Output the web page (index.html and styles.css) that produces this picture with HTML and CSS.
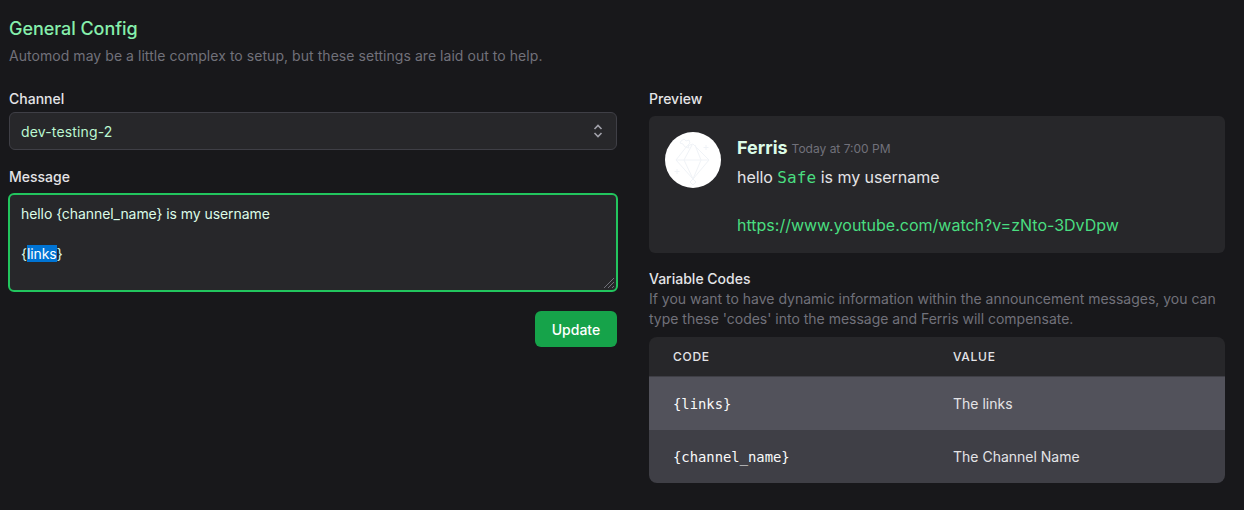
FILE: index.html
```html
<!DOCTYPE html>
<html>
<head>
    <meta charset="utf-8" />
    <title>General Config</title>
    <link rel="stylesheet" href="styles.css">
</head>
<body>
    <header class="head">
        <h1 class="title">General Config</h1>
        <p class="subtitle">Automod may be a little complex to setup, but these settings are laid out to help.</p>
    </header>

    <main class="columns">
        <section class="form">
            <p class="label">Channel</p>
            <div class="select">
                <span>dev-testing-2</span>
                <svg class="chevrons" width="10" height="16" viewBox="0 0 10 16" fill="none" stroke="#a1a1aa" stroke-width="1.6">
                    <path d="M1.500 6 5 2.500 8.500 6" />
                    <path d="M1.500 10 5 13.500 8.500 10" />
                </svg>
            </div>

            <p class="label label-message">Message</p>
            <div class="textarea">
                <p class="line">hello {channel_name} is my username</p>
                <p class="line line-gap">{<span class="selected">links</span>}</p>
                <svg class="grip" width="12" height="12" viewBox="0 0 12 12" stroke="#71717a" stroke-width="1">
                    <path d="M1 11 11 1M5 11l6-6M9 11l2-2" />
                </svg>
            </div>

            <div class="actions">
                <button class="update">Update</button>
            </div>
        </section>

        <section class="side">
            <p class="label">Preview</p>
            <div class="preview">
                <div class="avatar">
                    <svg width="56" height="56" viewBox="0 0 56 56" fill="none" stroke="#f0f3f7" stroke-width="1">
                        <path d="M22 14 28 12 44 28 28 47 11 28Z" />
                        <path d="M11 28H44M27 13 19 28 28 47 36 28 30 13" />
                        <path d="M16 9l3-2 2 2 3-1 1 3-2 2 1 3-4-1-2-3-3-1ZM28 47l3 3-3 3-3-3Z" />
                        <path d="M41 13v5M38.500 15.500h5M12 37v5M9.500 39.500h5" />
                    </svg>
                </div>
                <div class="message">
                    <p class="author"><strong>Ferris</strong> <span class="time">Today at 7:00 PM</span></p>
                    <p class="body body-text">hello <code class="mention">Safe</code> is my username</p>
                    <p class="body link-line"><a class="link">https://www.youtube.com/watch?v=zNto-3DvDpw</a></p>
                </div>
            </div>

            <p class="label label-codes">Variable Codes</p>
            <p class="hint">If you want to have dynamic information within the announcement messages, you can type these 'codes' into the message and Ferris will compensate.</p>

            <table class="codes">
                <thead>
                    <tr>
                        <th>Code</th>
                        <th>Value</th>
                    </tr>
                </thead>
                <tbody>
                    <tr class="row-light">
                        <td class="code">{links}</td>
                        <td>The links</td>
                    </tr>
                    <tr class="row-dark">
                        <td class="code">{channel_name}</td>
                        <td>The Channel Name</td>
                    </tr>
                </tbody>
            </table>
        </section>
    </main>
</body>
</html>
```

FILE: styles.css
```css
body {
    margin: 0;
    padding: 18px 19px 0 9px;
    height: 510px;
    box-sizing: border-box;
    overflow: hidden;
    background: #18181b;
    color: #e4e4e7;
    font-family: Inter, "Liberation Sans", sans-serif;
    font-size: 14px;
}

p {
    margin: 0;
}

.title {
    margin: 0;
    font-size: 18px;
    line-height: 22px;
    font-weight: 500;
    letter-spacing: -0.05px;
    color: #86efac;
}

.subtitle {
    margin-top: 6px;
    line-height: 20px;
    letter-spacing: 0.05px;
    color: #71717a;
}

.columns {
    display: flex;
    gap: 32px;
    margin-top: 23px;
}

.form {
    width: 608px;
}

.side {
    flex: 1;
}

.label {
    line-height: 20px;
    font-weight: 500;
    color: #e4e4e7;
}

.label-message {
    margin-top: 17px;
}

.label-codes {
    margin-top: 16px;
}

.select {
    display: flex;
    justify-content: space-between;
    align-items: center;
    box-sizing: border-box;
    height: 38px;
    margin-top: 3px;
    padding: 0 13px 0 11px;
    background: #27272a;
    border: 1px solid #3f3f46;
    border-radius: 6px;
    letter-spacing: 0.15px;
    color: #bbf7d0;
}

.textarea {
    position: relative;
    box-sizing: border-box;
    height: 99px;
    margin: 6px -1px 0;
    padding: 9px 11px;
    background: #27272a;
    border: 2px solid #22c55e;
    border-radius: 6px;
    letter-spacing: -0.07px;
    color: #dcfce7;
}

.line {
    line-height: 20px;
}

.line-gap {
    margin-top: 20px;
}

.selected {
    background: #0074d4;
    color: #fff;
}

.grip {
    position: absolute;
    right: 1px;
    bottom: 1px;
}

.actions {
    display: flex;
    justify-content: flex-end;
    margin-top: 19px;
}

.update {
    width: 82px;
    height: 36px;
    border: none;
    border-radius: 6px;
    background: #16a34a;
    color: #fff;
    font: 500 14px Inter, "Liberation Sans", sans-serif;
}

.preview {
    display: flex;
    gap: 16px;
    box-sizing: border-box;
    height: 137px;
    margin-top: 7px;
    padding: 16px;
    background: #27272a;
    border-radius: 6px;
}

.avatar {
    width: 56px;
    height: 56px;
    border-radius: 50%;
    background: #fff;
    flex: none;
}

.author {
    line-height: 28px;
    margin-top: 2px;
}

.author strong {
    font-size: 18px;
    font-weight: 700;
    color: #dcfce7;
}

.time {
    font-size: 12px;
    vertical-align: 1px;
    color: #71717a;
}

.body {
    font-size: 16px;
    line-height: 24px;
    margin-top: 2px;
    color: #e4e4e7;
}

.body-text {
    letter-spacing: -0.05px;
}

.mention {
    font-family: "DejaVu Sans Mono", monospace;
    font-size: 16px;
    letter-spacing: 0.1px;
    color: #4ade80;
}

.link-line {
    margin-top: 23px;
}

.link {
    color: #4ade80;
}

.hint {
    line-height: 20px;
    letter-spacing: -0.01px;
    color: #71717a;
}

.codes {
    width: 100%;
    margin-top: 8px;
    border-collapse: separate;
    border-spacing: 0;
    border-radius: 8px;
    overflow: hidden;
    table-layout: fixed;
}

.codes th {
    height: 39px;
    padding: 0 24px;
    background: #27272a;
    border-bottom: 1px solid #3f3f46;
    text-align: left;
    font-size: 12px;
    font-weight: 500;
    letter-spacing: 0.72px;
    text-transform: uppercase;
    color: #e4e4e7;
}

.codes td {
    height: 53px;
    padding: 0 24px;
    color: #e4e4e7;
}

.codes th:first-child,
.codes td:first-child {
    width: 232px;
}

.row-light td {
    background: #52525b;
}

.row-dark td {
    background: #3f3f46;
}

.codes .code {
    font-family: "DejaVu Sans Mono", monospace;
    font-size: 13.850px;
    color: #fafafa;
}
```
